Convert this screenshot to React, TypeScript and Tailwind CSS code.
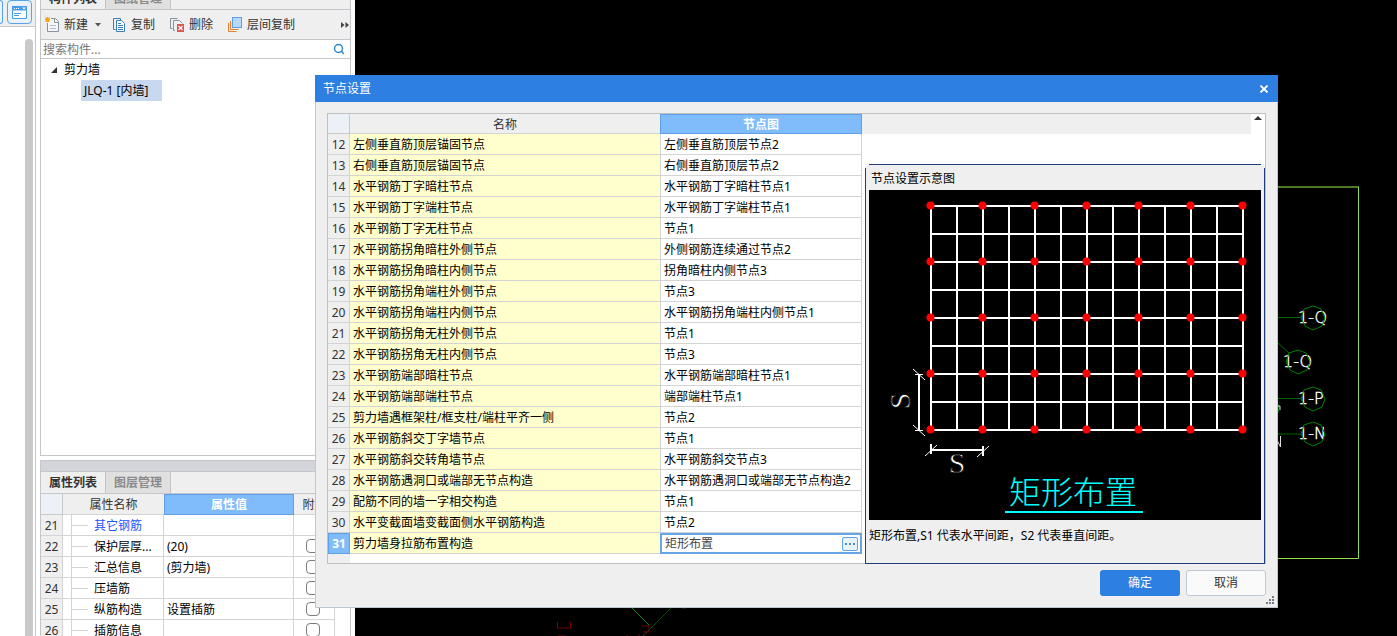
import React from "react";
import { Search } from "lucide-react";

interface NodeRow {
  id: number;
  name: string;
  node: string;
}

interface PropertyRow {
  id: number;
  name: string;
  value?: string;
  link?: boolean;
  attach?: boolean;
}

const nodeRows: NodeRow[] = [
  { id: 12, name: "左侧垂直筋顶层锚固节点", node: "左侧垂直筋顶层节点2" },
  { id: 13, name: "右侧垂直筋顶层锚固节点", node: "右侧垂直筋顶层节点2" },
  { id: 14, name: "水平钢筋丁字暗柱节点", node: "水平钢筋丁字暗柱节点1" },
  { id: 15, name: "水平钢筋丁字端柱节点", node: "水平钢筋丁字端柱节点1" },
  { id: 16, name: "水平钢筋丁字无柱节点", node: "节点1" },
  { id: 17, name: "水平钢筋拐角暗柱外侧节点", node: "外侧钢筋连续通过节点2" },
  { id: 18, name: "水平钢筋拐角暗柱内侧节点", node: "拐角暗柱内侧节点3" },
  { id: 19, name: "水平钢筋拐角端柱外侧节点", node: "节点3" },
  { id: 20, name: "水平钢筋拐角端柱内侧节点", node: "水平钢筋拐角端柱内侧节点1" },
  { id: 21, name: "水平钢筋拐角无柱外侧节点", node: "节点1" },
  { id: 22, name: "水平钢筋拐角无柱内侧节点", node: "节点3" },
  { id: 23, name: "水平钢筋端部暗柱节点", node: "水平钢筋端部暗柱节点1" },
  { id: 24, name: "水平钢筋端部端柱节点", node: "端部端柱节点1" },
  { id: 25, name: "剪力墙遇框架柱/框支柱/端柱平齐一侧", node: "节点2" },
  { id: 26, name: "水平钢筋斜交丁字墙节点", node: "节点1" },
  { id: 27, name: "水平钢筋斜交转角墙节点", node: "水平钢筋斜交节点3" },
  { id: 28, name: "水平钢筋遇洞口或端部无节点构造", node: "水平钢筋遇洞口或端部无节点构造2" },
  { id: 29, name: "配筋不同的墙一字相交构造", node: "节点1" },
  { id: 30, name: "水平变截面墙变截面侧水平钢筋构造", node: "节点2" },
  { id: 31, name: "剪力墙身拉筋布置构造", node: "矩形布置" },
];

const propertyRows: PropertyRow[] = [
  { id: 21, name: "其它钢筋", link: true },
  { id: 22, name: "保护层厚...", value: "(20)", attach: true },
  { id: 23, name: "汇总信息", value: "(剪力墙)", attach: true },
  { id: 24, name: "压墙筋", attach: true },
  { id: 25, name: "纵筋构造", value: "设置插筋", attach: true },
  { id: 26, name: "插筋信息", attach: true },
];

const axisLabels = [
  { x: 1313, y: 318, text: "1-Q" },
  { x: 1298, y: 362, text: "1-Q" },
  { x: 1313, y: 399, text: "1-P" },
  { x: 1313, y: 434, text: "1-N" },
];

function NewIcon() {
  return (
    <svg width="16" height="16" viewBox="0 0 16 16" fill="none">
      <path d="M6 1.500h4.500l3 3v10h-11V6" stroke="#87929f" fill="#f7f7f7" />
      <path d="M9.500 1.500v4h4" stroke="#87929f" />
      <path d="M5 8.500h6M5 11.500h6" stroke="#b5bcc4" />
      <path d="M2.500 0v5M0 2.500h5M.500.500l4 4M4.500.500l-4 4" stroke="#f5a11c" strokeWidth="1.2" />
    </svg>
  );
}

function CopyIcon() {
  return (
    <svg width="14" height="16" viewBox="0 0 14 16" fill="none" stroke="#3a7fc4">
      <path d="M2.500 12.500h-2V1.500h7v2" />
      <path d="M3.500 3.500h5l3 3v8h-8z" fill="#fff" />
      <path d="M5 6.500h3M5 8.500h5M5 10.500h5M5 12.500h5" />
    </svg>
  );
}

function DeleteIcon() {
  return (
    <svg width="16" height="16" viewBox="0 0 16 16" fill="none">
      <path d="M2.500 11.500h-2V1.500h7M5 13.500h-1.500v-10h6l3 3" stroke="#87929f" />
      <rect x="7" y="7" width="7" height="8" fill="#d9534f" />
      <path d="M8.500 9l4 4M12.500 9l-4 4" stroke="#fff" strokeWidth="1.2" />
    </svg>
  );
}

function LayerCopyIcon() {
  return (
    <svg width="16" height="16" viewBox="0 0 16 16" fill="none">
      <path d="M.500 6v8.500h8M2.500 4v8.500h8" stroke="#e98131" />
      <rect x="4.500" y=".500" width="9" height="10" fill="#b9d7f9" stroke="#5d9fe6" />
    </svg>
  );
}

function TabBar({ tabs }: { tabs: string[] }) {
  return (
    <div className="flex h-[21px] w-full shrink-0 bg-[#efefef]">
      {tabs.map((tab, idx) => (
        <button
          key={tab}
          type="button"
          className={
            idx === 0
              ? "w-[65px] border-r border-[#c3c3c3] font-bold text-[#333333]"
              : "w-[65px] border-r border-[#c3c3c3] bg-[#e0e0e0] font-bold text-[#8a8a8a]"
          }
        >
          {tab}
        </button>
      ))}
    </div>
  );
}

function ToolRail() {
  return (
    <div className="flex w-9 shrink-0 flex-col border-r border-[#c3c6cb] bg-white">
      <div className="flex h-[27px] shrink-0 gap-1 border-b border-[#c3c6cb] bg-[#efefef]">
        <div className="h-6 w-[3px] rounded-r border border-l-0 border-[#5aa3ea] bg-[#eaf3fd]" />
        <button
          type="button"
          aria-label="视图"
          className="flex h-6 w-[25px] items-center justify-center rounded border border-[#5aa3ea] bg-[#eaf3fd]"
        >
          <svg width="15" height="13" viewBox="0 0 15 13">
            <path d="M0 0h15v5H0z" fill="#4a9be8" />
            <path d="M.500 4.500v8h14v-8" fill="#fff" stroke="#4a9be8" />
            <path d="M2 2.500h1M4 2.500h1M6 2.500h1" stroke="#fff" />
            <path d="M10 1.500h4l-2 2z" fill="#fff" />
            <path d="M2 7.500h7M2 9.500h5" stroke="#4a9be8" />
          </svg>
        </button>
      </div>
      <div className="flex flex-1 justify-end pt-3 pr-[2px]">
        <div className="w-2 rounded-t-full bg-[#c9c9c9]" />
      </div>
    </div>
  );
}

function ComponentPanel() {
  return (
    <section className="flex h-[456px] shrink-0 flex-col border border-t-0 border-[#c3c6cb] bg-white">
      <div className="flex h-[10px] shrink-0 items-end overflow-hidden border-b border-[#c3c6cb]">
        <TabBar tabs={["构件列表", "图纸管理"]} />
      </div>
      <div className="flex h-[30px] shrink-0 items-center border-b border-[#c3c6cb] bg-[#efefef] pl-1 text-[#333333]">
        <button type="button" className="flex items-center gap-[3px]">
          <NewIcon />
          新建
          <svg width="6" height="4" viewBox="0 0 6 4" className="ml-1">
            <path d="M0 0h6L3 3.500z" fill="#555" />
          </svg>
        </button>
        <button type="button" className="ml-3 flex items-center gap-1">
          <CopyIcon />
          复制
        </button>
        <button type="button" className="ml-[15px] flex items-center gap-[3px]">
          <DeleteIcon />
          删除
        </button>
        <button type="button" className="ml-[15px] flex items-center gap-[3px]">
          <LayerCopyIcon />
          层间复制
        </button>
        <button type="button" aria-label="更多" className="mr-px ml-auto">
          <svg width="8" height="6" viewBox="0 0 8 6" fill="#444">
            <path d="M0 0l3.500 3L0 6zM4.500 0L8 3 4.500 6z" />
          </svg>
        </button>
      </div>
      <label className="flex h-[19px] shrink-0 items-center border-b border-[#c3c6cb] pr-[5px] pl-[2px]">
        <input
          type="text"
          aria-label="搜索构件"
          placeholder="搜索构件..."
          className="min-w-0 flex-1 pt-[2px] outline-none placeholder:text-[#777777]"
        />
        <Search className="h-3 w-3 text-[#2f86c8]" strokeWidth={3} />
      </label>
      <div className="flex flex-col items-start">
        <div className="flex h-[21px] items-center gap-[7px] pl-[10px] text-black">
          <svg width="6" height="6" viewBox="0 0 6 6">
            <path d="M6 0v6H0z" fill="#333" />
          </svg>
          剪力墙
        </div>
        <div className="ml-10 flex h-[21px] w-[81px] items-center bg-[#c8d8ef] pl-[3px] text-black">
          JLQ-1 [内墙]
        </div>
      </div>
    </section>
  );
}

function PropertyPanel() {
  return (
    <section className="mt-1 flex min-h-0 flex-1 flex-col overflow-hidden border border-b-0 border-[#c3c6cb] bg-white">
      <div className="h-[11px] shrink-0 border-b border-[#c3c6cb] bg-[#d3d5da]" />
      <TabBar tabs={["属性列表", "图层管理"]} />
      <table className="w-[294px] table-fixed border-separate border-spacing-0 border-t border-[#c3c6cb] text-black">
        <colgroup>
          <col className="w-[22px]" />
          <col className="w-[101px]" />
          <col className="w-[130px]" />
          <col className="w-[41px]" />
        </colgroup>
        <thead>
          <tr className="h-[21px] bg-[#efefef] text-[#333333]">
            <th aria-label="序号" className="border-r border-b border-[#c9c9c9] bg-[#ecf1f8] p-0" />
            <th className="border-b border-[#d4d4d4] p-0 pt-[2px] font-normal">属性名称</th>
            <th className="border border-[#5f9fe6] bg-[#80bbfb] p-0 font-bold text-white">属性值</th>
            <th className="border-b border-[#d4d4d4] p-0 pt-[2px] font-normal">附加</th>
          </tr>
        </thead>
        <tbody>
          {propertyRows.map((row) => (
            <tr key={row.id} className="h-[21px]">
              <td className="border-r border-b border-[#d4d4d4] bg-[#efefef] p-0 pt-[2px] text-center text-[#333333]">
                {row.id}
              </td>
              <td className="border-r border-b border-[#d4d4d4] p-0">
                <div className="ml-2 flex h-5 items-center border-l border-[#d4d4d4] whitespace-nowrap">
                  <span className="mr-[6px] h-px w-4 bg-[#d4d4d4]" />
                  <span className={row.link ? "pt-[2px] text-[#1a55ff]" : "pt-[2px]"}>{row.name}</span>
                </div>
              </td>
              <td className="border-r border-b border-[#d4d4d4] p-0 pt-[2px] pl-[3px]">{row.value}</td>
              <td className="border-r border-b border-[#d4d4d4] p-0">
                {row.attach && (
                  <input
                    type="checkbox"
                    aria-label={row.name}
                    className="ml-3 block h-[14px] w-[14px] appearance-none rounded-sm border border-[#7c7c7c] bg-white"
                  />
                )}
              </td>
            </tr>
          ))}
        </tbody>
      </table>
    </section>
  );
}

function DrawingCanvas() {
  return (
    <main className="min-w-0 flex-1 bg-black">
      <svg className="h-full w-full" fill="none">
        <g transform="translate(-355 0)">
          <path d="M1278 187h81" stroke="#4a7a26" strokeWidth="2" />
          <path d="M1358.500 187v371.500H1278" stroke="#93dc4c" />
          <path d="M1278 317.500h23M1278 343l11 10M1278 398.500h23M1278 434h23" stroke="#006400" />
          {axisLabels.map((label) => (
            <g key={label.y} transform={`translate(${label.x} ${label.y})`}>
              <text
                x="-15"
                y="5"
                fill="#fff"
                stroke="#fff"
                strokeWidth="0.4"
                fontSize="16"
                className="font-['DejaVu_Sans','Noto_Sans',sans-serif] font-extralight"
              >
                {label.text}
              </text>
              <path d="M0-12l8 3 4 9-3 8-9 4-8-4-4-8 3-9z" stroke="#008000" />
            </g>
          ))}
          <path d="M1277 403q4 5 0 11" stroke="#008000" />
          <path d="M1278 406h2v4M1280.500 436v11l-3-6" stroke="#ddd" />
          <path d="M631 607l18 18" stroke="#0a8a0a" />
          <path d="M672 607l-29 29M682 608h4" stroke="#064f06" />
          <path d="M557.500 622v6h13v-6M642 626h7v6h-6M627 635v1M639 634v2M558 636h8" stroke="#7a0000" />
        </g>
      </svg>
    </main>
  );
}

function NodeDiagram() {
  const columns = Array.from({ length: 13 }, (_, i) => 62 + i * 26);
  const lines = Array.from({ length: 9 }, (_, i) => 16 + i * 28);

  return (
    <svg viewBox="0 0 392 330" className="block w-full bg-black" fill="none">
      <g stroke="#fff" strokeWidth="2">
        {columns.map((x) => (
          <path key={x} d={`M${x} 15v226`} />
        ))}
        {lines.map((y) => (
          <path key={y} d={`M61 ${y}h314`} />
        ))}
        <path d="M50 184v56M62 260h52" />
        <path d="M62 254v10M114 256v10" />
      </g>
      <path d="M46 184.500h8M46 240.500h8M44 179l12 11M44 235l12 11M56 266l12-11M108 267l12-11" stroke="#fff" />
      {lines
        .filter((_, i) => i % 2 === 0)
        .map((y) =>
          columns
            .filter((_, i) => i % 2 === 0)
            .map((x) => <circle key={`${x}-${y}`} cx={x - 0.5} cy={y - 0.5} r="4" fill="#f00" />)
        )}
      <g
        fill="#fff"
        stroke="#000"
        strokeWidth="0.8"
        fontSize="30"
        textAnchor="middle"
        className="font-['Liberation_Serif',serif]"
      >
        <text x="88" y="283">S</text>
        <text transform="translate(41 211) rotate(-90)">S</text>
      </g>
      <text
        x="140"
        y="314"
        fill="#0ff"
        fontSize="32"
        className="font-['Noto_Sans_CJK_SC',sans-serif] font-light"
      >
        矩形布置
      </text>
      <path d="M136 322h138" stroke="#0ff" strokeWidth="2" />
    </svg>
  );
}

function NodeTable() {
  return (
    <table className="w-[534px] shrink-0 table-fixed border-separate border-spacing-0 text-black">
      <colgroup>
        <col className="w-[22px]" />
        <col className="w-[310px]" />
        <col className="w-[202px]" />
      </colgroup>
      <thead>
        <tr className="h-5 bg-[#efefef] text-[#333333]">
          <th aria-label="序号" className="border-r border-b border-[#c9c9c9] bg-[#ecf1f8] p-0" />
          <th className="border-b border-[#d4d4d4] p-0 pt-[2px] font-normal">名称</th>
          <th className="border border-[#5f9fe6] bg-[#80bbfb] p-0 pt-[2px] font-bold text-white">节点图</th>
        </tr>
      </thead>
      <tbody>
        {nodeRows.map((row) => {
          const active = row.id === 31;

          return (
            <tr key={row.id} className="h-[21px]">
              <td
                className={
                  active
                    ? "border border-[#5f9fe6] bg-[#80bbfb] p-0 text-center font-bold text-white"
                    : "border-r border-b border-[#d4d4d4] bg-[#efefef] p-0 pt-[2px] text-center text-[#333333]"
                }
              >
                {row.id}
              </td>
              <td className="border-b border-[#d4d4d4] bg-[#ffffce] p-0 pt-[2px] pl-[3px]">{row.name}</td>
              {active ? (
                <td className="border-2 border-[#68a5e6] p-0">
                  <div className="flex items-center pr-[2px] pl-[3px]">
                    <input
                      type="text"
                      aria-label={row.name}
                      defaultValue={row.node}
                      className="h-4 min-w-0 flex-1 text-[#444444] outline-none"
                    />
                    <button
                      type="button"
                      aria-label="选择节点图"
                      className="flex h-[14px] w-4 items-center justify-center gap-[2px] rounded-[2px] border border-[#5aa3e6] bg-[#e9f3fd]"
                    >
                      <span className="h-[2px] w-[2px] bg-[#4a8fd4]" />
                      <span className="h-[2px] w-[2px] bg-[#4a8fd4]" />
                      <span className="h-[2px] w-[2px] bg-[#4a8fd4]" />
                    </button>
                  </div>
                </td>
              ) : (
                <td className="border-x border-b border-[#d4d4d4] p-0 pt-[2px] pl-[3px]">{row.node}</td>
              )}
            </tr>
          );
        })}
        <tr className="h-[9px]">
          <td className="bg-[#efefef] p-0" />
          <td className="p-0" />
          <td className="p-0" />
        </tr>
      </tbody>
    </table>
  );
}

function NodeDialog() {
  return (
    <div
      role="dialog"
      aria-labelledby="node-dialog-title"
      className="absolute top-[75px] left-[315px] flex w-[963px] flex-col bg-[#efefef]"
    >
      <header className="flex h-[27px] items-center justify-between bg-[#2d7fe1] pr-[9px] pl-2 text-white">
        <h1 id="node-dialog-title">节点设置</h1>
        <button type="button" aria-label="关闭">
          <svg width="10" height="8" viewBox="0 0 10 8">
            <path d="M1.500.500l7 7M8.500.500l-7 7" stroke="#fff" strokeWidth="1.8" />
          </svg>
        </button>
      </header>
      <div className="border border-t-0 border-[#bfc7d2] px-[11px] pt-[11px] pb-[11px]">
        <div className="flex border border-[#c0c0c0] bg-white">
          <NodeTable />
          <div className="flex min-w-0 flex-1 flex-col">
            <div className="flex h-5 shrink-0">
              <div className="flex-1 bg-[#efefef]" />
              <button type="button" aria-label="向上滚动" className="flex w-[14px] justify-center pt-[2px]">
                <svg width="8" height="4" viewBox="0 0 8 4">
                  <path d="M4 0l4 4H0z" fill="#333" />
                </svg>
              </button>
            </div>
            <section className="mt-[30px] -mb-px ml-[3px] flex flex-1 flex-col rounded-t bg-[#efefef]">
              <div className="mx-1 h-1 border-t border-[#1f3f77]" />
              <div className="flex-1 border border-t-0 border-[#1f3f77] px-[3px] text-black">
                <h2 className="h-[22px] pl-[2px] leading-[22px]">节点设置示意图</h2>
                <NodeDiagram />
                <p className="mt-[7px] leading-[18px]">矩形布置,S1 代表水平间距，S2 代表垂直间距。</p>
              </div>
            </section>
          </div>
        </div>
        <div className="mt-[6px] flex justify-end gap-[6px]">
          <button type="button" className="h-[26px] w-20 rounded-[3px] bg-[#2d7fe1] text-white">
            确定
          </button>
          <button
            type="button"
            className="h-[26px] w-20 rounded-[3px] border border-[#c0c8d6] bg-[#fafafa] text-[#333333]"
          >
            取消
          </button>
        </div>
      </div>
      <svg width="8" height="8" viewBox="0 0 8 8" fill="#777d86" className="absolute right-1 bottom-1">
        <path d="M6 0h2v2H6zM3 3h2v2H3zM6 3h2v2H6zM0 6h2v2H0zM3 6h2v2H3zM6 6h2v2H6z" />
      </svg>
    </div>
  );
}

export default function App() {
  return (
    <div className="relative flex h-screen overflow-hidden bg-black font-['Noto_Sans','Noto_Sans_CJK_SC',sans-serif] text-[12px] leading-4">
      <ToolRail />
      <aside className="flex w-[319px] shrink-0 flex-col bg-white pr-1 pl-1">
        <ComponentPanel />
        <PropertyPanel />
      </aside>
      <DrawingCanvas />
      <NodeDialog />
    </div>
  );
}
